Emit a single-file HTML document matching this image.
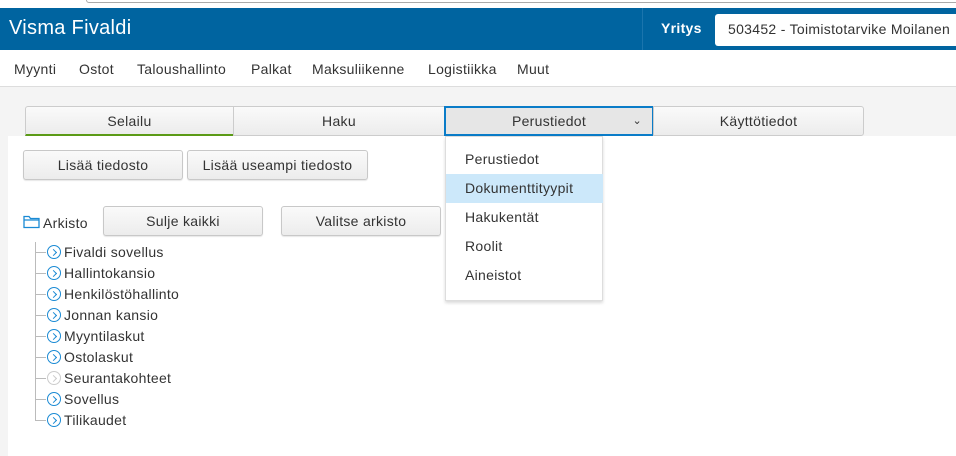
<!DOCTYPE html>
<html><head><meta charset="utf-8"><style>
*{box-sizing:border-box;margin:0;padding:0}
body{width:956px;height:456px;overflow:hidden;background:#f4f4f4;font-family:"Liberation Sans",sans-serif;font-size:14px;color:#333;position:relative;letter-spacing:0.3px}
.abs{position:absolute}
.top{left:0;top:0;width:956px;height:8px;background:#fff}
.top .bar{position:absolute;left:86px;top:-4px;width:880px;height:7px;border:1px solid #aaa;border-radius:3px;background:#fff}
.hdr{left:0;top:8px;width:956px;height:42px;background:#0064a0;color:#fff}
.nav{left:0;top:50px;width:956px;height:37px;background:#fff;border-bottom:1px solid #ddd}
.nav span{position:absolute;top:11px;font-size:14px;color:#333}
.panel{left:8px;top:136px;width:948px;height:320px;background:#fff}
.tab{top:106px;height:30px;border:1px solid #ccc;background:linear-gradient(#fafafa,#ececec);text-align:center;line-height:28px;font-size:14px}
.btn{height:30px;border:1px solid #c8c8c8;border-radius:3px;background:linear-gradient(#fafafa,#ececec);text-align:center;line-height:28px;font-size:14px;box-shadow:0 1px 1px rgba(0,0,0,.1)}
.dd{left:445px;top:136px;width:158px;height:165px;background:#fff;border:1px solid #ddd;box-shadow:0 2px 3px rgba(0,0,0,.15)}
.dd div{position:absolute;left:0;width:157px;height:29px;line-height:29px;padding-left:19px}
.tree div{position:absolute;left:64px;font-size:14px;line-height:16px}
.ic{position:absolute;left:47px;width:14px;height:14px;border:1.5px solid #1a8ad4;border-radius:50%}
.ic::after{content:"";position:absolute;left:2.5px;top:3.5px;width:4px;height:4px;border-right:1.5px solid #1a8ad4;border-top:1.5px solid #1a8ad4;transform:rotate(45deg)}
.ic.g{border-color:#ccc}.ic.g::after{border-color:#ccc}
.hl{position:absolute;left:45px;width:2px;height:1px;background:#bbb}
</style></head><body>
<div class="abs top"><div class="bar"></div></div>
<div class="abs hdr">
<div class="abs" style="left:9px;top:9px;font-size:20px">Visma Fivaldi</div>
<div class="abs" style="left:642px;top:0;width:1px;height:42px;background:#1b75ad"></div>
<div class="abs" style="left:661px;top:12px;font-size:14px;font-weight:bold">Yritys</div>
<div class="abs" style="left:715px;top:6px;width:250px;height:32px;background:#fff;border-radius:3px;color:#333;padding:7px 0 0 13px;font-size:14px">503452 - Toimistotarvike Moilanen</div>
</div>
<div class="abs nav">
<span style="left:14px">Myynti</span><span style="left:79px">Ostot</span><span style="left:137px">Taloushallinto</span><span style="left:251px">Palkat</span><span style="left:312px">Maksuliikenne</span><span style="left:428px">Logistiikka</span><span style="left:517px">Muut</span>
</div>
<div class="abs panel"></div>
<div class="abs tab" style="left:25px;width:209px;border-bottom:2px solid #5b9a16;border-radius:3px 0 0 0">Selailu</div>
<div class="abs tab" style="left:233px;width:212px">Haku</div>
<div class="abs tab" style="left:444px;width:210px;border:2px solid #0a7cc8;background:#e6e6e6;line-height:26px">Perustiedot<span style="position:absolute;right:10px;top:0;font-size:11px">&#8964;</span></div>
<div class="abs tab" style="left:653px;width:211px;border-radius:0 3px 3px 0">Käyttötiedot</div>
<div class="abs btn" style="left:23px;top:150px;width:160px">Lisää tiedosto</div>
<div class="abs btn" style="left:187px;top:150px;width:181px">Lisää useampi tiedosto</div>
<div class="abs btn" style="left:103px;top:206px;width:160px">Sulje kaikki</div>
<div class="abs btn" style="left:281px;top:206px;width:160px">Valitse arkisto</div>
<svg class="abs" style="left:23px;top:214px" width="17" height="15" viewBox="0 0 17 15"><path d="M1 2.5h5l1.5 2H16v9H1z M1 6h15" fill="none" stroke="#1a8ad4" stroke-width="1.3"/></svg>
<div class="abs" style="left:43px;top:215px">Arkisto</div>
<div class="abs" style="left:35px;top:242px;width:1px;height:179px;background:#bbb"></div>
<div class="tree">
<span class="hl" style="left:36px;width:10px;top:252px"></span><span class="ic" style="top:245px"></span><div style="top:244px">Fivaldi sovellus</div>
<span class="hl" style="left:36px;width:10px;top:273px"></span><span class="ic" style="top:266px"></span><div style="top:265px">Hallintokansio</div>
<span class="hl" style="left:36px;width:10px;top:294px"></span><span class="ic" style="top:287px"></span><div style="top:286px">Henkilöstöhallinto</div>
<span class="hl" style="left:36px;width:10px;top:315px"></span><span class="ic" style="top:308px"></span><div style="top:307px">Jonnan kansio</div>
<span class="hl" style="left:36px;width:10px;top:336px"></span><span class="ic" style="top:329px"></span><div style="top:328px">Myyntilaskut</div>
<span class="hl" style="left:36px;width:10px;top:357px"></span><span class="ic" style="top:350px"></span><div style="top:349px">Ostolaskut</div>
<span class="hl" style="left:36px;width:10px;top:378px"></span><span class="ic g" style="top:371px"></span><div style="top:370px">Seurantakohteet</div>
<span class="hl" style="left:36px;width:10px;top:399px"></span><span class="ic" style="top:392px"></span><div style="top:391px">Sovellus</div>
<span class="hl" style="left:36px;width:10px;top:420px"></span><span class="ic" style="top:413px"></span><div style="top:412px">Tilikaudet</div>
</div>
<div class="abs dd">
<div style="top:8px">Perustiedot</div>
<div style="top:37px;background:#cce8fa">Dokumenttityypit</div>
<div style="top:66px">Hakukentät</div>
<div style="top:95px">Roolit</div>
<div style="top:124px">Aineistot</div>
</div>
</body></html>
